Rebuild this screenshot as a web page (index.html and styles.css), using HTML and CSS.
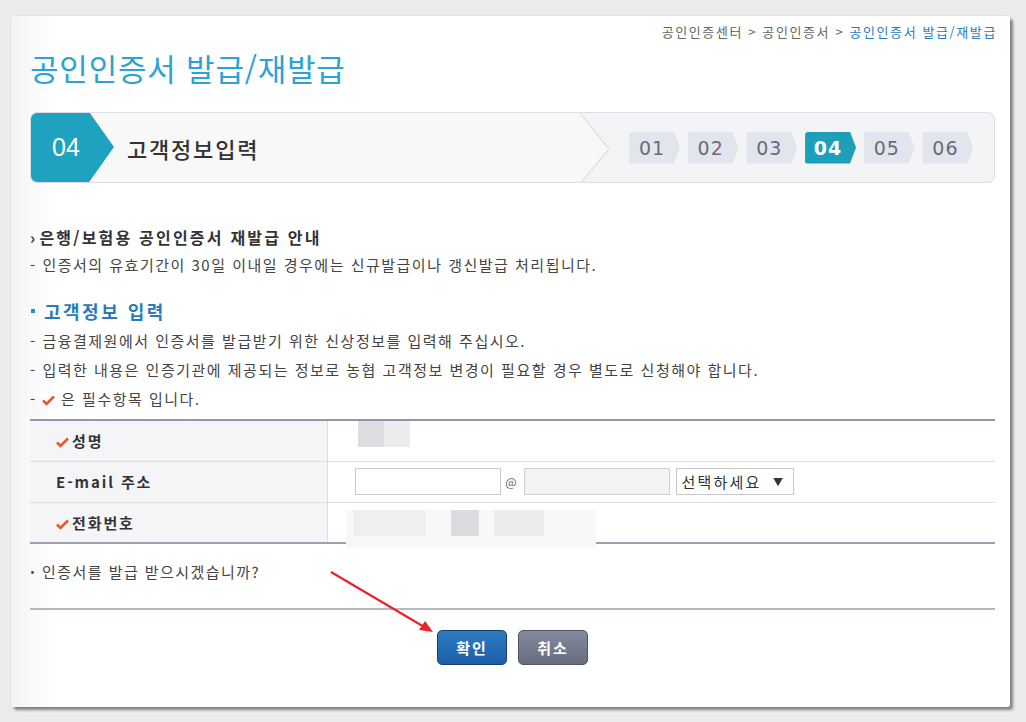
FILE: index.html
```html
<!DOCTYPE html>
<html lang="ko">
<head>
<meta charset="utf-8">
<title>공인인증서 발급/재발급</title>
<link rel="stylesheet" href="styles.css">
</head>
<body>
<div class="panel">
  <div class="crumbs">공인인증센터 &gt; 공인인증서 &gt; <span class="cur">공인인증서 발급/재발급</span></div>
  <h1 class="title">공인인증서 발급/재발급</h1>

  <div class="stepbar">
    <div class="step-left">
      <div class="step-num">04</div>
      <div class="step-name">고객정보입력</div>
    </div>
    <svg class="chev" width="30" height="71" viewBox="0 0 30 71">
      <polygon points="0,0 1,0 29,36 1,71 0,71" fill="#f8f8f9"/>
      <polyline points="0,0 29,36 0,71" fill="none" stroke="#dcdee4" stroke-width="1.2"/>
    </svg>
    <div class="step-right">
      <span class="badge">01</span>
      <span class="badge">02</span>
      <span class="badge">03</span>
      <span class="badge on">04</span>
      <span class="badge">05</span>
      <span class="badge">06</span>
    </div>
  </div>

  <h2 class="sub-head"><span class="arr">›</span>은행/보험용 공인인증서 재발급 안내</h2>
  <p class="desc">- 인증서의 유효기간이 30일 이내일 경우에는 신규발급이나 갱신발급 처리됩니다.</p>

  <h2 class="blue-head"><span class="sq"></span>고객정보 입력</h2>
  <p class="desc">- 금융결제원에서 인증서를 발급받기 위한 신상정보를 입력해 주십시오.</p>
  <p class="desc">- 입력한 내용은 인증기관에 제공되는 정보로 농협 고객정보 변경이 필요할 경우 별도로 신청해야 합니다.</p>
  <p class="desc">- <svg class="chk" width="13" height="11" viewBox="0 0 13 11"><path d="M1 5.5 L4.5 9 L12 1.5" fill="none" stroke="#e8582a" stroke-width="2.6"/></svg> 은 필수항목 입니다.</p>

  <table class="form">
    <tr>
      <th><svg class="chk" width="13" height="11" viewBox="0 0 13 11"><path d="M1 5.5 L4.5 9 L12 1.5" fill="none" stroke="#e8582a" stroke-width="2.6"/></svg>성명</th>
      <td><div class="blur1"><i class="b-d"></i><i class="b-l"></i></div></td>
    </tr>
    <tr>
      <th class="nochk">E-mail 주소</th>
      <td>
        <div class="email">
          <input class="inp" type="text">
          <span class="at">@</span>
          <input class="inp dis" type="text" disabled>
          <div class="sel">선택하세요 <span class="tri">▼</span></div>
        </div>
      </td>
    </tr>
    <tr>
      <th><svg class="chk" width="13" height="11" viewBox="0 0 13 11"><path d="M1 5.5 L4.5 9 L12 1.5" fill="none" stroke="#e8582a" stroke-width="2.6"/></svg>전화번호</th>
      <td class="td-blur"><div class="blur3"><i class="c1"></i><i class="c2"></i><i class="c3"></i><i class="c4"></i><i class="c5"></i></div></td>
    </tr>
  </table>

  <p class="ask"><span class="dot">·</span> 인증서를 발급 받으시겠습니까?</p>
  <div class="rule"></div>
  <div class="btns">
    <button class="btn ok">확인</button>
    <button class="btn cancel">취소</button>
  </div>

  <svg class="arrow" width="120" height="80" viewBox="0 0 120 80">
    <line x1="2" y1="2" x2="97" y2="58" stroke="#e8232a" stroke-width="2.2"/>
    <polygon points="104,62 90,60 96,51" fill="#e8232a"/>
  </svg>
</div>
</body>
</html>
```

FILE: styles.css
```css
html, body { margin: 0; padding: 0; }
body {
  background: #ececec;
  width: 1026px;
  height: 722px;
  overflow: hidden;
  padding: 16px 0 0 11px;
  box-sizing: border-box;
  font-family: "Noto Sans CJK KR", "Noto Sans", sans-serif;
  color: #444;
}
.panel {
  position: relative;
  width: 999px;
  height: 691px;
  box-sizing: border-box;
  padding: 0 15px 0 19px;
  background: linear-gradient(to right, #f4f4f4 0, #fff 45px);
  border-radius: 3px;
  box-shadow: 3px 3px 3px rgba(0,0,0,0.45), 0 0 2px rgba(0,0,0,0.12);
}
.crumbs {
  text-align: right;
  font-size: 13px;
  line-height: 16px;
  padding-top: 8px;
  color: #666;
  letter-spacing: 1.6px;
  margin-right: -2px;
}
.crumbs .cur { color: #2b7bbd; }
.title {
  margin: 8px 0 0 0;
  font-size: 31px;
  font-weight: 400;
  line-height: 40px;
  color: #2ba3d3;
  letter-spacing: 0.8px;
}
.stepbar {
  margin-top: 24px;
  height: 71px;
  display: flex;
  border: 1px solid #dcdfe5;
  border-radius: 7px;
  overflow: hidden;
  box-sizing: border-box;
  background: #f3f4f6;
}
.step-left {
  width: 549px;
  display: flex;
  align-items: center;
  background: #f8f8f9;
}
.step-num {
  width: 84px;
  height: 71px;
  margin-top: -1px;
  margin-left: -1px;
  background: #1fa2c0;
  clip-path: polygon(0 0, 70% 0, 100% 50%, 70% 100%, 0 100%);
  color: #fff;
  font-family: "Liberation Sans", Arial, sans-serif;
  font-size: 25px;
  line-height: 71px;
  padding-left: 22px;
  box-sizing: border-box;
}
.step-name {
  margin-left: 13px;
  font-size: 22px;
  font-weight: 500;
  color: #333;
  letter-spacing: 1.8px;
}
.chev { display: block; flex: none; }
.step-right {
  flex: 1;
  display: flex;
  align-items: center;
  padding-left: 19px;
  gap: 7.7px;
}
.badge {
  width: 51px;
  height: 32px;
  background: #e3e5ed;
  clip-path: polygon(0 0, 88% 0, 100% 50%, 88% 100%, 0 100%);
  border-radius: 3px 0 0 3px;
  color: #676b7d;
  font-family: "DejaVu Sans", Verdana, sans-serif;
  font-size: 19px;
  line-height: 32px;
  padding-right: 5px;
  box-sizing: border-box;
  text-align: center;
  letter-spacing: 1px;
}
.badge.on { background: #1d9fba; color: #fff; font-weight: bold; }

.sub-head {
  margin: 43px 0 0 0;
  font-size: 16px;
  font-weight: 700;
  line-height: 22px;
  color: #333;
  letter-spacing: 2.2px;
}
.sub-head .arr { font-size: 16px; margin-right: 2px; }
.desc {
  margin: 6px 0 0 0;
  font-size: 15px;
  line-height: 22px;
  color: #444;
  letter-spacing: 1.5px;
}
.blue-head {
  margin: 23px 0 2px 0;
  font-size: 18px;
  font-weight: 700;
  line-height: 24px;
  color: #2a7ab8;
  letter-spacing: 2.5px;
  display: flex;
  align-items: center;
}
.blue-head ~ .desc { margin-top: 7px; }
.blue-head .sq {
  width: 4px; height: 4px;
  background: #2a8cc4;
  margin: 0 9px 0 1px;
}
.chk { display: inline-block; vertical-align: -1px; }

.form {
  margin-top: 9px;
  width: 965px;
  border-collapse: collapse;
  border-top: 2px solid #8f97a8;
  border-bottom: 2px solid #9aa1b0;
}
.form tr { height: 41px; }
.form tr + tr th, .form tr + tr td { border-top: 1px solid #d9dce1; }
.form th {
  width: 297px;
  background: #f5f5f7;
  border-right: 1px solid #d9dce1;
  text-align: left;
  font-size: 15px;
  font-weight: 700;
  color: #333;
  padding: 0 0 0 26px;
  box-sizing: border-box;
  letter-spacing: 1.9px;
}
.form th .chk { margin-right: 3px; }
.form td { padding: 0 0 0 27px; vertical-align: middle; }
.blur1 { display: flex; margin-top: -13px; margin-left: 3px; }
.blur1 i { display: block; width: 26px; height: 26px; }
.b-d { background: #dedee2; }
.b-l { background: #ececef; }
.email { display: flex; align-items: center; }
.inp {
  width: 146px; height: 27px;
  border: 1px solid #c8c8cc;
  box-sizing: border-box;
  margin: 0;
  padding: 0;
  background: #fff;
}
.inp.dis { background: #f3f3f4; border-color: #cfcfd2; }
.at { font-size: 12px; color: #666; width: 25px; text-align: center; margin-left: -2px; }
.sel {
  margin-left: 6px;
  width: 118px; height: 27px;
  border: 1px solid #c8c8cc;
  box-sizing: border-box;
  font-size: 15px;
  line-height: 25px;
  color: #333;
  padding-left: 5px;
  letter-spacing: 2.2px;
  background: #fff;
  white-space: nowrap;
}
.sel .tri { font-size: 10px; margin-left: 5px; vertical-align: 2px; }
.td-blur { padding-left: 18px !important; }
.blur3 {
  display: flex;
  width: 250px;
  height: 38px;
  margin-top: 7px;
  margin-bottom: -6px;
  background: #f8f8f9;
  position: relative;
  z-index: 1;
}
.blur3 i { display: block; height: 26px; }
.c1 { width: 8px; }
.c2 { width: 72px; background: #efeff2; }
.c3 { width: 25px; }
.c4 { width: 28px; background: #dcdce0; }
.c5 { width: 50px; background: #ececef; margin-left: 15px; }

.ask {
  margin: 17px 0 0 0;
  font-size: 15px;
  line-height: 22px;
  color: #444;
  letter-spacing: 1.45px;
}
.ask .dot { font-weight: 700; }
.rule {
  margin-top: 25px;
  height: 2px;
  background: #b3b8c4;
}
.btns {
  display: flex;
  justify-content: center;
  gap: 11px;
  margin-top: 20px;
}
.btn {
  width: 70px; height: 35px;
  border-radius: 5px;
  font-family: "Noto Sans CJK KR", sans-serif;
  font-size: 15px;
  font-weight: 700;
  color: #fff;
  letter-spacing: 2px;
  padding: 0;
  cursor: pointer;
}
.btn.ok {
  background: linear-gradient(#2d7cc4, #1d5ea6);
  border: 1px solid #1a3f6e;
}
.btn.cancel {
  background: linear-gradient(#838a9c, #676d7f);
  border: 1px solid #4f5566;
}
.arrow {
  position: absolute;
  left: 318px;
  top: 554px;
}
```
